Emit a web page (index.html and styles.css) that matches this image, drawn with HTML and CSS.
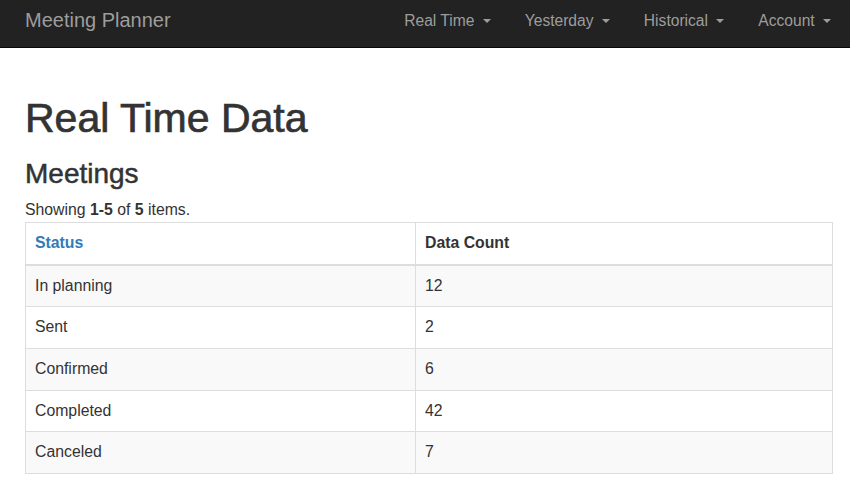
FILE: index.html
```html
<!DOCTYPE html>
<html>
<head>
<meta charset="utf-8">
<title>Meeting Planner</title>
<link rel="stylesheet" href="styles.css">
</head>
<body>
<nav class="navbar">
  <a class="brand" href="#">Meeting Planner</a>
  <ul class="nav">
    <li><a href="#">Real Time <span class="caret"></span></a></li>
    <li><a href="#">Yesterday <span class="caret"></span></a></li>
    <li><a href="#">Historical <span class="caret"></span></a></li>
    <li><a href="#">Account <span class="caret"></span></a></li>
  </ul>
</nav>
<main class="container">
  <h1 class="title">Real Time Data</h1>
  <h3 class="subtitle">Meetings</h3>
  <div class="summary">Showing <b>1-5</b> of <b>5</b> items.</div>
  <table class="grid">
    <thead>
      <tr><th class="col-status"><a href="#">Status</a></th><th>Data Count</th></tr>
    </thead>
    <tbody>
      <tr><td>In planning</td><td>12</td></tr>
      <tr><td>Sent</td><td>2</td></tr>
      <tr><td>Confirmed</td><td>6</td></tr>
      <tr><td>Completed</td><td>42</td></tr>
      <tr><td>Canceled</td><td>7</td></tr>
    </tbody>
  </table>
</main>
</body>
</html>
```

FILE: styles.css
```css
* { box-sizing: border-box; }
html, body { margin: 0; padding: 0; }
body {
  font-family: "Liberation Sans", Arial, Helvetica, sans-serif;
  font-size: 15.8px;
  line-height: 22.6px;
  color: #333;
  background: #fff;
}
a { text-decoration: none; }

.navbar {
  height: 48px;
  background: #222;
  border-bottom: 1px solid #080808;
  display: flex;
  justify-content: space-between;
  align-items: flex-start;
  padding: 0 2px 0 25px;
}
.brand {
  color: #9d9d9d;
  font-size: 20px;
  line-height: 40px;
}
.nav {
  list-style: none;
  margin: 0;
  padding: 0;
  display: flex;
}
.nav a {
  display: flex;
  align-items: center;
  color: #9d9d9d;
  font-size: 15.6px;
  line-height: 41px;
  padding: 0 17px;
  white-space: pre;
}
.caret {
  display: inline-block;
  width: 0;
  height: 0;
  margin-left: 4px;
  border-top: 4.5px solid #9d9d9d;
  border-left: 4.5px solid transparent;
  border-right: 4.5px solid transparent;
}

.container {
  padding: 0 17px 0 25px;
}
.title {
  font-size: 41px;
  line-height: 44px;
  font-weight: 500;
  -webkit-text-stroke: 0.7px #333;
  margin: 48px 0 0;
}
.subtitle {
  font-size: 28px;
  line-height: 31px;
  font-weight: 500;
  -webkit-text-stroke: 0.5px #333;
  margin: 18px 0 0;
}
.summary {
  margin-top: 10px;
}
.grid {
  width: 808px;
  border-collapse: collapse;
  border: 1px solid #ddd;
}
.grid th, .grid td {
  text-align: left;
  padding: 9px;
  line-height: 22.6px;
  border: 1px solid #ddd;
  vertical-align: top;
}
.grid th {
  font-weight: bold;
  border-bottom: 2px solid #ddd;
  padding-top: 9.6px;
  padding-bottom: 9px;
}
.grid .col-status { width: 390px; }
.grid th a { color: #337ab7; }
.grid tbody tr:nth-child(odd) { background: #f9f9f9; }
```
